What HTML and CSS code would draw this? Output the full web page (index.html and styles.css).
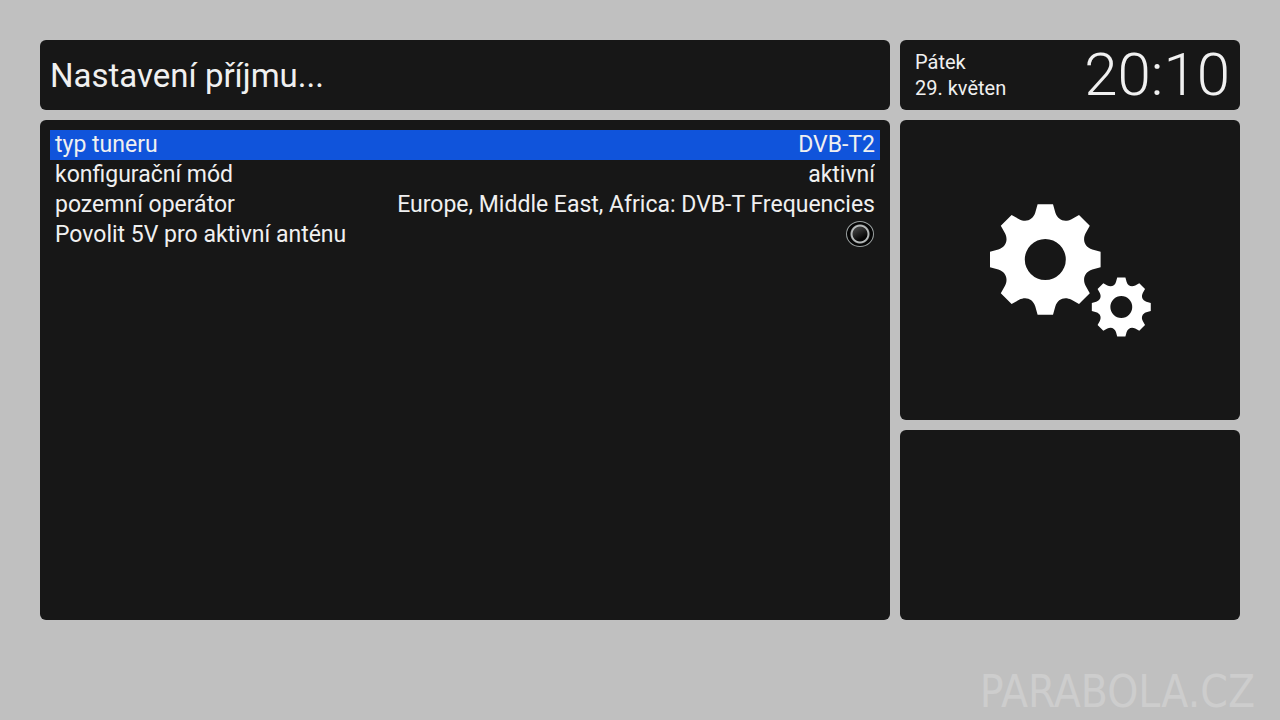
FILE: index.html
```html
<!doctype html>
<html lang="cs">
  <head>
    <meta charset="UTF-8" />
    <meta name="viewport" content="width=device-width, initial-scale=1.0" />
    <title>Nastavení příjmu...</title>
    <link rel="stylesheet" href="styles.css" />
  </head>
  <body>
    <div class="screen">
      <header class="panel title-bar">
        <h1>Nastavení příjmu...</h1>
      </header>

      <div class="panel clock">
        <div class="date">
          <p>Pátek</p>
          <p>29. květen</p>
        </div>
        <time class="time" datetime="20:10">20:10</time>
      </div>

      <main class="panel settings">
        <form>
          <div class="row selected">
            <label for="tunerType">typ tuneru</label>
            <select id="tunerType" name="tunerType">
              <option>DVB-T2</option>
            </select>
          </div>
          <div class="row">
            <label for="configMode">konfigurační mód</label>
            <select id="configMode" name="configMode">
              <option>aktivní</option>
            </select>
          </div>
          <div class="row">
            <label for="provider">pozemní operátor</label>
            <select id="provider" name="provider">
              <option>Europe, Middle East, Africa: DVB-T Frequencies</option>
            </select>
          </div>
          <div class="row">
            <label for="antennaPower">Povolit 5V pro aktivní anténu</label>
            <input type="checkbox" id="antennaPower" name="antennaPower" />
          </div>
        </form>
      </main>

      <aside class="side">
        <div class="panel picture">
          <svg class="gears" viewBox="0 0 162 134" aria-hidden="true">
            <defs>
              <path
                id="gear"
                fill-rule="evenodd"
                d="M-7.7-55.3H7.7L10-47C12.5-39.5 19.1-36.8 26.2-40.3L33.7-44.5 44.5-33.7 40.3-26.2C36.8-19.1 39.5-12.5 47-10L55.3-7.7V7.7L47 10C39.5 12.5 36.8 19.1 40.3 26.2L44.5 33.7 33.7 44.5 26.2 40.3C19.1 36.8 12.5 39.5 10 47L7.7 55.3H-7.7L-10 47C-12.5 39.5-19.1 36.8-26.2 40.3L-33.7 44.5-44.5 33.7-40.3 26.2C-36.8 19.1-39.5 12.5-47 10L-55.3 7.7V-7.7L-47-10C-39.5-12.5-36.8-19.1-40.3-26.2L-44.5-33.7-33.7-44.5-26.2-40.3C-19.1-36.8-12.5-39.5-10-47ZM0-20.5A20.5 20.5 0 1 0 0 20.5A20.5 20.5 0 1 0 0-20.5Z"
              />
            </defs>
            <use href="#gear" transform="translate(56.3 56.5)" />
            <use href="#gear" transform="translate(132.3 104) scale(0.533)" />
          </svg>
        </div>
        <div class="panel help"></div>
      </aside>
    </div>

    <footer>PARABOLA.CZ</footer>
  </body>
</html>
```

FILE: styles.css
```css
* {
  margin: 0;
  padding: 0;
  box-sizing: border-box;
}

body {
  min-height: 100vh;
  padding: 40px 40px 0;
  display: flex;
  flex-direction: column;
  justify-content: space-between;
  background-color: #c0c0c0;
  color: #f0f0f0;
  font-family: Roboto, 'Liberation Sans', sans-serif;
}

.screen {
  display: grid;
  grid-template-columns: 5fr 2fr;
  gap: 10px;
}

.panel {
  background-color: #171717;
  border-radius: 6px;
}

.title-bar {
  display: flex;
  align-items: center;
  min-height: 70px;
  padding: 0 10px;
}

h1 {
  font-size: 33px;
  font-weight: 400;
}

.clock {
  display: flex;
  justify-content: space-between;
  align-items: center;
  padding: 0 10px 0 15px;
}

.date {
  font-size: 20px;
  line-height: 26px;
}

.time {
  font-size: 60px;
  font-weight: 300;
  line-height: 70px;
}

/* Settings list */
.settings {
  padding: 10px;
}

.row {
  display: flex;
  justify-content: space-between;
  align-items: center;
  height: 30px;
  padding: 0 5px;
  font-size: 23px;
  line-height: 30px;
}

.selected {
  background-color: #1054db;
}

select {
  appearance: none;
  border: none;
  background: none;
  color: inherit;
  font: inherit;
  text-align: right;
  text-align-last: right;
}

input[type='checkbox'] {
  appearance: none;
  width: 28px;
  height: 26px;
  margin: 0 1px 2px 0;
  border: 1px solid #9aa0a0;
  border-radius: 50%;
  background:
    radial-gradient(circle, transparent 7px, #c0c4c4 8px, #a8acac 9px, #050505 10px),
    linear-gradient(150deg, #484848 25%, #050505 65%);
}

input[type='checkbox']:checked {
  background: radial-gradient(circle, #f0f0f0 8px, #050505 10px);
}

/* Right column */
.side {
  display: flex;
  flex-direction: column;
  gap: 10px;
}

.picture {
  display: flex;
  justify-content: center;
  align-items: center;
  min-height: 300px;
}

.gears {
  width: 162px;
  height: 134px;
  fill: #fff;
}

.help {
  min-height: 190px;
}

footer {
  margin-right: -15px;
  color: #cdcdcd;
  font-family: 'DejaVu Sans Condensed', 'Liberation Sans', sans-serif;
  font-size: 44px;
  line-height: 56px;
  text-align: right;
}
```
